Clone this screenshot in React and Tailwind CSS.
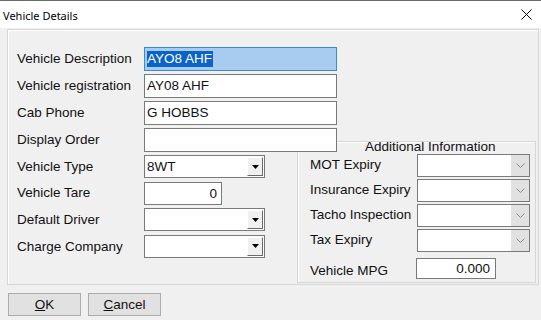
import React from "react";

const Arrow = () => (
  <div className="w-[16px] h-full bg-[#f0f0f0] border-t border-l border-t-white border-l-white border-b border-r border-b-[#696969] border-r-[#696969] flex items-center justify-center">
    <svg width="7" height="4" viewBox="0 0 7 4"><path d="M0 0h7L3.5 4z" fill="#000" /></svg>
  </div>
);

const Combo = ({ value, w = "w-[121px]" }) => (
  <div className={`${w} h-full bg-white border border-[#7a7a7a] flex items-stretch p-[1px]`}>
    <div className="flex-1 pl-[1px] leading-[19px]">{value}</div>
    <Arrow />
  </div>
);

const DateBox = () => (
  <div className="w-[113px] h-full bg-white border border-[#7a7a7a] flex items-stretch">
    <div className="flex-1" />
    <div className="w-[18px] bg-[#e1e1e1] flex items-center justify-center">
      <svg width="9" height="5" viewBox="0 0 9 5"><path d="M0.5 0.5L4.5 4.5L8.5 0.5" fill="none" stroke="#8a8a8a" strokeWidth="1" /></svg>
    </div>
  </div>
);

const Row = ({ label, children, h = "h-[24px]", lw = "w-[127px]", lo = "" }) => (
  <div className={`flex items-center ${h}`}>
    <div className={`${lw} shrink-0 whitespace-nowrap ${lo}`}>{label}</div>
    {children}
  </div>
);

export default function App() {
  return (
    <div className="w-[541px] h-[320px] bg-[#f0f0f0] overflow-hidden text-[#111] text-[13.5px] font-['Liberation_Sans',Arial,sans-serif]">
      <div className="h-[28px] bg-white border-t border-[#6b6b6b] flex items-center justify-between pl-[3px] pr-[9px]">
        <span className="text-[11px] text-black font-['Noto_Sans',sans-serif] leading-none mt-[1px]">Vehicle Details</span>
        <svg width="11" height="11" viewBox="0 0 11 11"><path d="M0.5 0.5L10.5 10.5M10.5 0.5L0.5 10.5" stroke="#000" strokeWidth="1" /></svg>
      </div>
      <div className="pt-[1px] pl-[7px] pr-[2px]">
        <div className="h-[256px] border border-[#d6d6d6] shadow-[inset_1px_1px_0_#ffffff] pl-[9px] pt-[17px]">
          <div className="flex flex-col gap-[3px]">
            <Row label="Vehicle Description">
              <div className="w-[193px] h-full border border-[#3c8ad6] bg-[#a8ccef] p-[2px] flex items-center">
                <span className="bg-[#0a64c8] text-white leading-[16px] pr-[1px]">AYO8 AHF</span>
              </div>
            </Row>
            <Row label="Vehicle registration">
              <div className="w-[193px] h-full border border-[#7a7a7a] bg-white pl-[2px] leading-[22px]">AY08 AHF</div>
            </Row>
            <Row label="Cab Phone">
              <div className="w-[193px] h-full border border-[#7a7a7a] bg-white pl-[2px] leading-[22px]">G HOBBS</div>
            </Row>
            <Row label="Display Order">
              <div className="relative z-10 w-[193px] h-full border border-[#7a7a7a] bg-white" />
            </Row>
          </div>
          <div className="flex mt-[3px]">
            <div className="w-[280px] flex flex-col gap-[3.5px]">
              <Row label="Vehicle Type" h="h-[23px]" lo="mt-[1px]"><Combo value="8WT" /></Row>
              <Row label="Vehicle Tare" h="h-[23px]" lo="mt-[1px]">
                <div className="w-[78px] h-full border border-[#7a7a7a] bg-white text-right pr-[4px] leading-[21px]">0</div>
              </Row>
              <Row label="Default Driver" h="h-[23px]" lo="mt-[2px]"><Combo value="" /></Row>
              <Row label="Charge Company" h="h-[23px]" lo="mt-[2px]"><Combo value="" /></Row>
            </div>
            <div className="w-[239px] h-[142px] -mt-[14px] border border-[#d6d6d6] shadow-[inset_1px_1px_0_#ffffff] pl-[12px]">
              <div className="h-[12px] leading-[12px] -mt-[1px] pl-[55px] whitespace-nowrap">Additional Information</div>
              <div className="mt-[1px] flex flex-col gap-[2px]">
                <Row label="MOT Expiry" h="h-[23px]" lw="w-[107px]"><DateBox /></Row>
                <Row label="Insurance Expiry" h="h-[23px]" lw="w-[107px]"><DateBox /></Row>
                <Row label="Tacho Inspection" h="h-[23px]" lw="w-[107px]"><DateBox /></Row>
                <Row label="Tax Expiry" h="h-[23px]" lw="w-[107px]"><DateBox /></Row>
                <div className="flex items-end h-[25px]">
                  <div className="w-[106px] shrink-0 leading-[16px]">Vehicle MPG</div>
                  <div className="w-[80px] h-[21px] border border-[#7a7a7a] bg-white text-right pr-[5px] leading-[19px]">0.000</div>
                </div>
              </div>
            </div>
          </div>
        </div>
        <div className="flex gap-[7px] mt-[8px] pl-[1px]">
          <button className="w-[73px] h-[23px] bg-[#e1e1e1] border border-[#adadad] leading-[21px] text-[#111]"><u>O</u>K</button>
          <button className="w-[73px] h-[23px] bg-[#e1e1e1] border border-[#adadad] leading-[21px] text-[#111]"><u>C</u>ancel</button>
        </div>
      </div>
    </div>
  );
}
